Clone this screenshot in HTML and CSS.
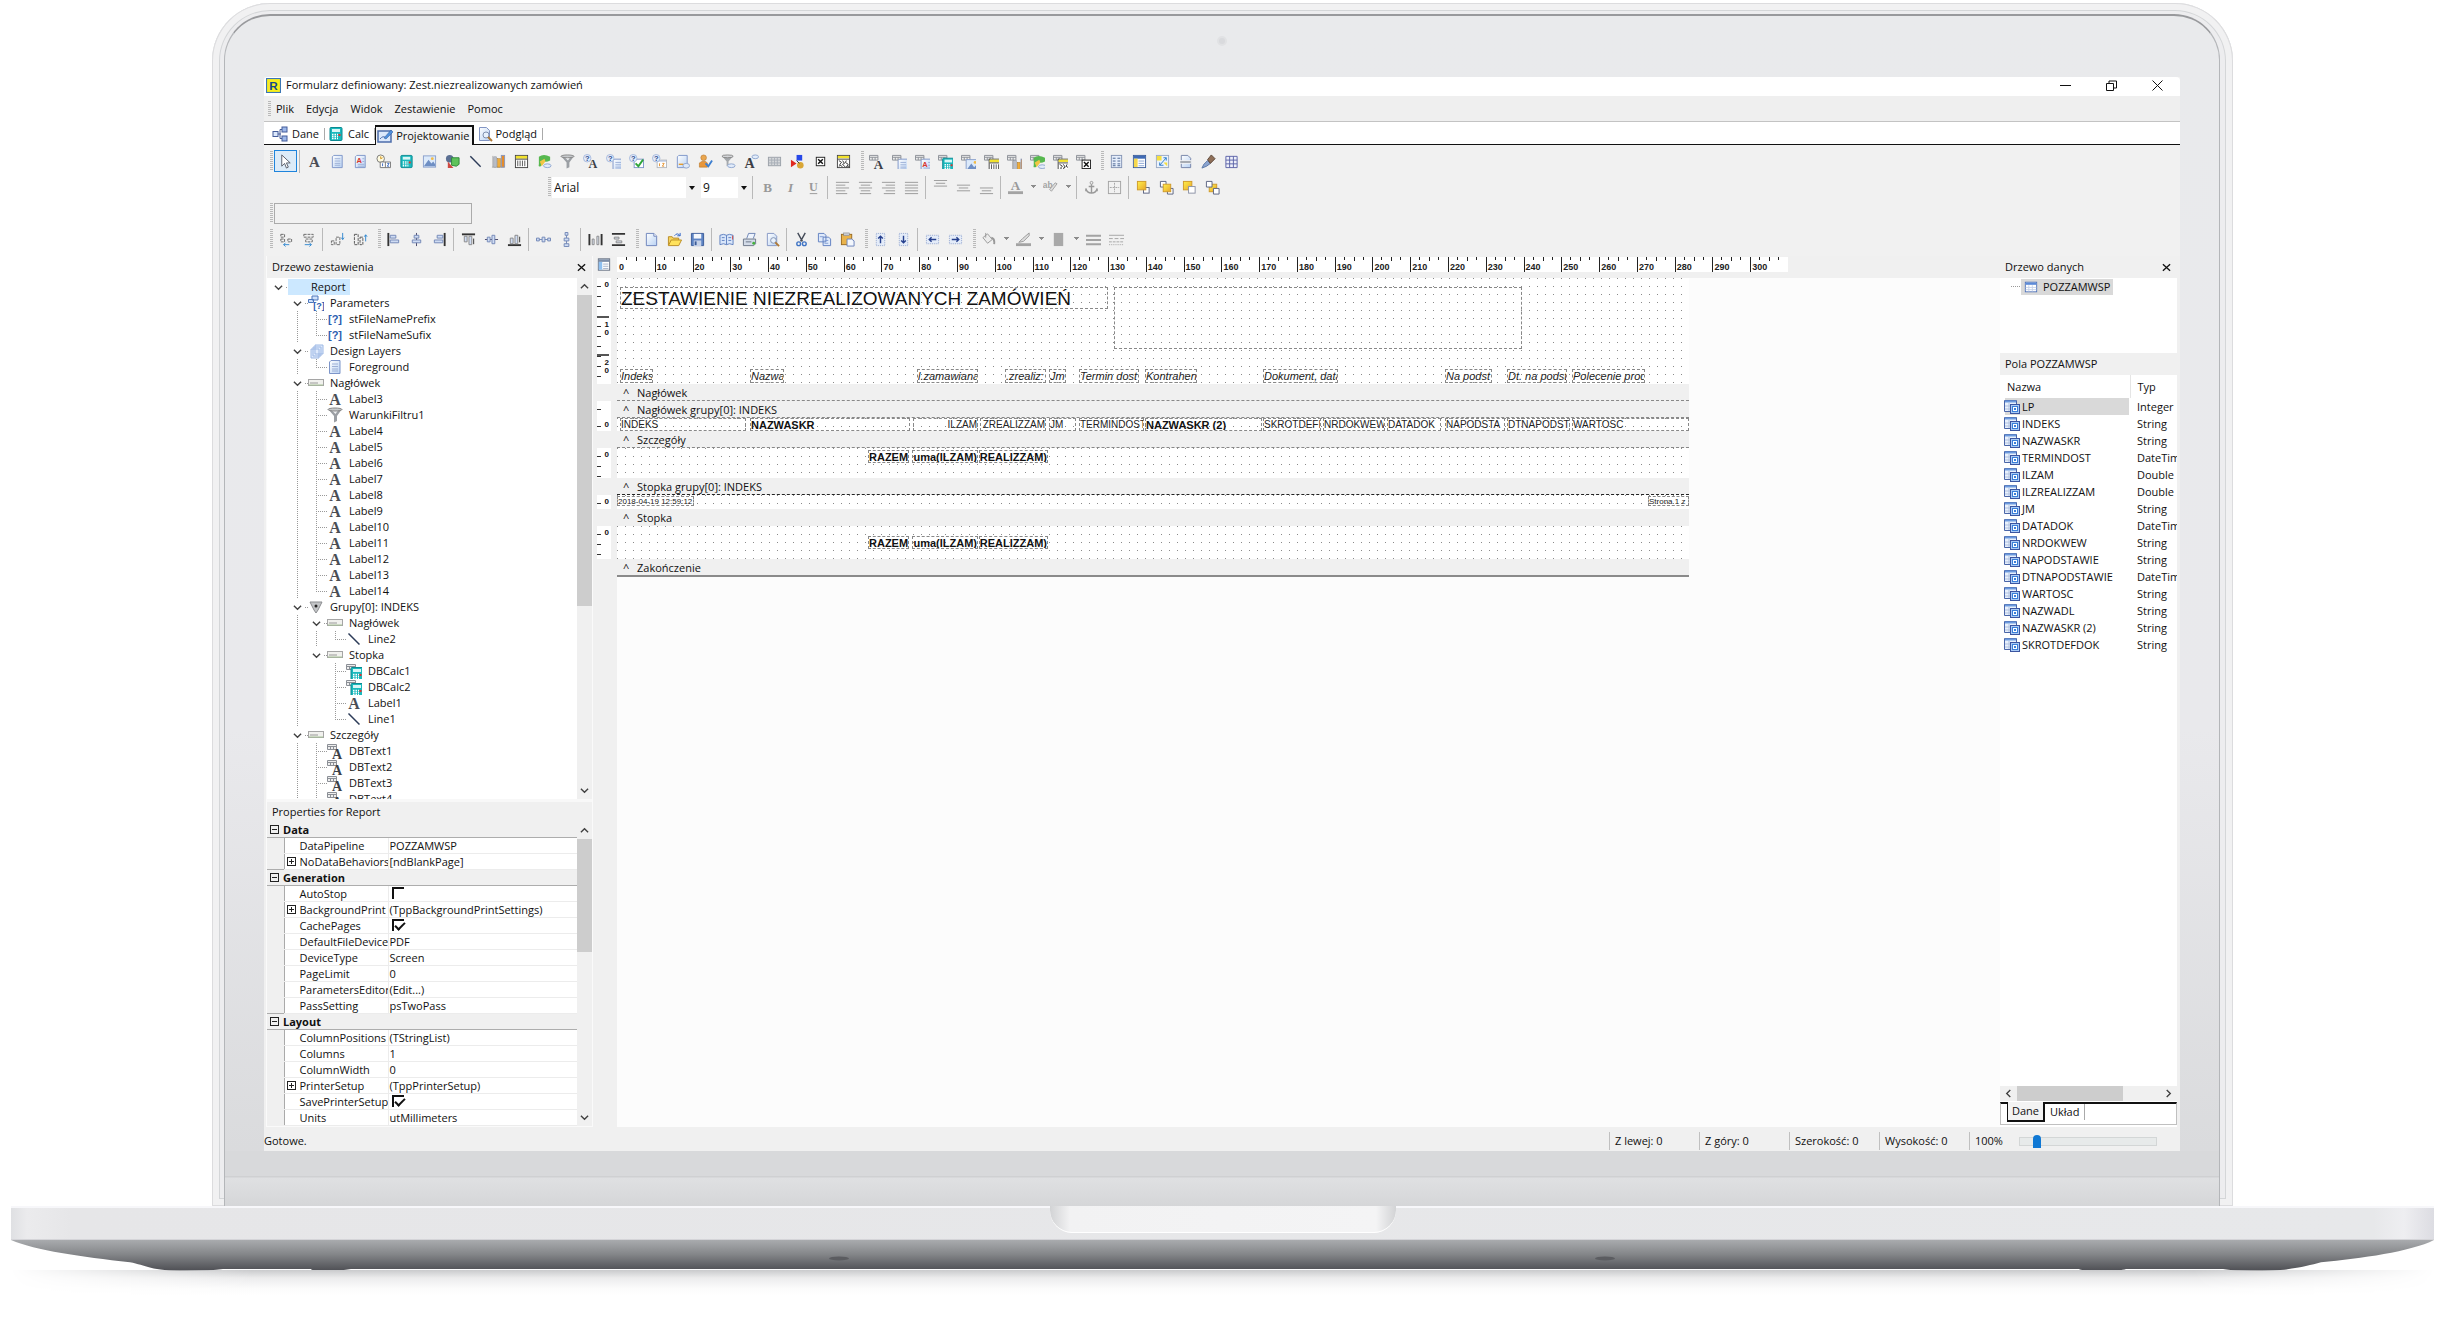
FILE: index.html
```html
<!DOCTYPE html>
<html lang="pl">
<head>
<meta charset="utf-8">
<title>Formularz definiowany: Zest.niezrealizowanych zamówień</title>
<link rel="stylesheet" href="styles.css">
</head>
<body>
<svg class="defs" aria-hidden="true">
<defs>
<linearGradient id="gy" x1="0" y1="0" x2="1" y2="1"><stop offset="0" stop-color="#fff04a"/><stop offset="1" stop-color="#e8a62c"/></linearGradient>
<linearGradient id="gb" x1="0" y1="0" x2="1" y2="1"><stop offset="0" stop-color="#fff"/><stop offset="1" stop-color="#b9d2f3"/></linearGradient>
<linearGradient id="gu" x1="0" y1="0" x2="0" y2="1"><stop offset="0" stop-color="#a9abae"/><stop offset=".45" stop-color="#85878a"/><stop offset="1" stop-color="#4d4e53"/></linearGradient>
<symbol id="cursor" viewBox="0 0 16 16"><path d="M4 1v12l3-3 2 5 2-1-2-4.500h4z" fill="#fff" stroke="#555b66"/></symbol>
<symbol id="A" viewBox="0 0 16 16"><text x="8" y="14" text-anchor="middle" class="serif" font-size="16" fill="#4a4d55">A</text></symbol>
<symbol id="page" viewBox="0 0 16 16"><path d="M4 1.500h9v13H2.500V3z" fill="url(#gb)" stroke="#7d95c9"/></symbol>
<symbol id="memo" viewBox="0 0 16 16"><use href="#page"/><path d="M5 5h6M5 7.500h6M5 10h6M5 12h6" stroke="#9db0d6"/></symbol>
<symbol id="rich" viewBox="0 0 16 16"><use href="#page"/><text x="6.500" y="9.500" text-anchor="middle" class="sansb" font-size="8" fill="#d8362c">A</text><path d="M10 5h2M10 8h2M5 11h7M5 13h7" stroke="#9db0d6"/></symbol>
<symbol id="sysvar" viewBox="0 0 16 16"><circle cx="5" cy="5" r="4" fill="#fffbe0" stroke="#777"/><path d="M5 2.500V5l2-1" stroke="#d09010" fill="none"/><path d="M4.500 8.500h11v6h-11zM10 8.500v6" fill="#fff" stroke="#777"/><path d="M7 10v3M12 10h2l-2 3h2" stroke="#3a6ac0" fill="none"/></symbol>
<symbol id="calc" viewBox="0 0 16 16"><rect x="2" y="1.500" width="12" height="13" rx="1" fill="#19b9bd" stroke="#0b8a92"/><rect x="4" y="3" width="8" height="3" fill="#d8f6f6"/><path d="M4 8.500h6M4 10.500h6M4 12.500h6" stroke="#fff" stroke-width="1.500" stroke-dasharray="1.500 1"/><rect x="10.500" y="8" width="2" height="2" fill="#e2342e"/></symbol>
<symbol id="image" viewBox="0 0 16 16"><rect x="1.500" y="2" width="13" height="12" fill="#dceafb" stroke="#8aa0cc"/><path d="M2 13l5-7 3 4 2-2 2 3v2z" fill="#6f8fc4"/><circle cx="11" cy="5" r="1.500" fill="#f3bb45"/></symbol>
<symbol id="shape" viewBox="0 0 16 16"><circle cx="5" cy="5" r="4" fill="#5b6f92"/><path d="M7 4h8v7l-3 2-5-1z" fill="#5fc35b" stroke="#30883a"/><path d="M3 15V8l6 7z" fill="#cf4a42"/></symbol>
<symbol id="line" viewBox="0 0 16 16"><path d="M2.500 2.500l11 11" stroke="#2c3b58" stroke-width="1.500"/></symbol>
<symbol id="chart" viewBox="0 0 16 16"><path d="M2 2v12M1 14h13" stroke="#aaa"/><rect x="3" y="3" width="3" height="11" fill="#b9bdc6" stroke="#878c99" stroke-width=".5"/><rect x="7" y="5" width="3" height="9" fill="#efac3a" stroke="#a5701c" stroke-width=".5"/><rect x="11" y="1.500" width="3.500" height="12.500" fill="#e68c2b" stroke="#8897bb"/></symbol>
<symbol id="barcode" viewBox="0 0 16 16"><rect x="1.500" y="1.500" width="13" height="13" fill="#fff" stroke="#444"/><rect x="2" y="2" width="12" height="3" fill="#f2e22d"/><path d="M2 5.500h12" stroke="#444"/><path d="M4 7v6M6.500 7v6M9 7v6M11.500 7v6" stroke="#555"/></symbol>
<symbol id="region" viewBox="0 0 16 16"><path d="M2 3q5-4 12 0v4q-4 2-6 1l-4 5q-3 1-2-2z" fill="#57b84f"/><path d="M3 8l5-3 1 3-4 5z" fill="#f1c644"/><ellipse cx="11" cy="12.500" rx="4" ry="2" fill="#e2ecfa" stroke="#8fa6cf"/></symbol>
<symbol id="filter" viewBox="0 0 16 16"><path d="M1 2h14L10 9v5l-3 1.500V9z" fill="#9b9fa4"/><path d="M5 3.500h6L8.500 7z" fill="#eef0f2"/><ellipse cx="8" cy="2.500" rx="7" ry="1.500" fill="#c6c9cc" stroke="#888"/></symbol>
<symbol id="q" viewBox="0 0 16 16"><circle cx="4.500" cy="4.500" r="4" fill="#e2ebfa" stroke="#8ea5d2" stroke-width=".7"/><text x="4.500" y="7.500" text-anchor="middle" class="sansb" font-size="8" fill="#2d4d91">?</text></symbol>
<symbol id="qA" viewBox="0 0 16 16"><use href="#q"/><text x="10.500" y="15" text-anchor="middle" class="serif" font-size="13" fill="#3c3f47">A</text></symbol>
<symbol id="qmemo" viewBox="0 0 16 16"><svg x="5" y="4" width="12" height="12"><use href="#memo"/></svg><use href="#q"/></symbol>
<symbol id="qcheck" viewBox="0 0 16 16"><rect x="5.500" y="5.500" width="10" height="9" fill="#fff" stroke="#7d95c9"/><path d="M7 10l3 3 5-7" fill="none" stroke="#2fa53a" stroke-width="2"/><use href="#q"/></symbol>
<symbol id="qcal" viewBox="0 0 16 16"><rect x="5.500" y="6.500" width="10" height="8" fill="#fff" stroke="#b5b8bd"/><path d="M6 7.500h9" stroke="#9fb2d8"/><path d="M8 10v3M11 10h2l-2 3h2" stroke="#e59330" fill="none"/><use href="#q"/></symbol>
<symbol id="pagelink" viewBox="0 0 16 16"><use href="#page"/><path d="M4 11h5" stroke="#e49c2d" stroke-width="1.500"/><ellipse cx="12" cy="12.500" rx="3.500" ry="2.500" fill="#dfe9f8" stroke="#8fa6cf"/></symbol>
<symbol id="person" viewBox="0 0 16 16"><circle cx="6" cy="4" r="3" fill="#e9a64f" stroke="#b87326" stroke-width=".6"/><path d="M1.500 14V9.500L4 8h4l2 1.500V14z" fill="#e8963a" stroke="#b87326" stroke-width=".6"/><path d="M8 10l3 3 4-6" fill="none" stroke="#3d7fd0" stroke-width="2"/></symbol>
<symbol id="filter2" viewBox="0 0 16 16"><path d="M1 2h12L8 8v4l-2 1V8z" fill="#a4a8ac"/><ellipse cx="7" cy="2.500" rx="6" ry="1.500" fill="#d3d5d8" stroke="#888"/><ellipse cx="11" cy="12.500" rx="4" ry="2" fill="#e2ecfa" stroke="#8fa6cf"/></symbol>
<symbol id="Alink" viewBox="0 0 16 16"><text x="6" y="15" text-anchor="middle" class="serif" font-size="15" fill="#3c3f47">A</text><ellipse cx="12" cy="3" rx="3.500" ry="2" fill="#e2ecfa" stroke="#8fa6cf"/></symbol>
<symbol id="gridgray" viewBox="0 0 16 16"><rect x="1.500" y="3.500" width="13" height="9" fill="#d5d7da" stroke="#9aa0a8"/><path d="M2 6.500h12M2 9.500h12M5 4v8M8 4v8M11 4v8" stroke="#a9afb8"/></symbol>
<symbol id="tee" viewBox="0 0 16 16"><rect x="7" y="1" width="6" height="6" fill="#2748e8"/><path d="M1 6v8l6-4z" fill="#e02a20"/><circle cx="11" cy="12" r="3.500" fill="#d9a636"/><path d="M7 7l3 3" stroke="#333"/></symbol>
<symbol id="xbox" viewBox="0 0 16 16"><rect x="3.500" y="3.500" width="9" height="9" fill="#fff" stroke="#222"/><path d="M5.500 5.500l5 5M10.500 5.500l-5 5" stroke="#111" stroke-width="1.500"/></symbol>
<symbol id="code2d" viewBox="0 0 16 16"><rect x="1.500" y="1.500" width="13" height="13" fill="#fff" stroke="#444"/><rect x="2" y="2" width="12" height="2.500" fill="#f2e22d"/><path d="M2 5.500h12" stroke="#444"/><path d="M3 7l3 2-2 2 3 3M7 7l2 3-2 1 3 3M11 7l-1 2 3 2-2 3M3 13l2-1M12 13h2" fill="none" stroke="#333"/></symbol>
<symbol id="db" viewBox="0 0 16 16"><path d="M.5 1.500h9v5h-9zM.5 3.500h9M3.500 3.500v3M6.500 3.500v3" fill="#eee" stroke="#8b8f96"/></symbol>
<symbol id="dbA" viewBox="0 0 16 16"><use href="#db"/><text x="10" y="15.500" text-anchor="middle" class="serif" font-size="14" fill="#3c3f47">A</text></symbol>
<symbol id="dbmemo" viewBox="0 0 16 16"><use href="#db"/><svg x="4" y="4" width="12" height="12"><use href="#memo"/></svg></symbol>
<symbol id="dbrich" viewBox="0 0 16 16"><use href="#db"/><svg x="4" y="4" width="12" height="12"><use href="#rich"/></svg></symbol>
<symbol id="dbcalc" viewBox="0 0 16 16"><use href="#db"/><svg x="3" y="3" width="13" height="13"><use href="#calc"/></svg></symbol>
<symbol id="dbimg" viewBox="0 0 16 16"><use href="#db"/><svg x="4" y="4" width="12" height="12"><use href="#image"/></svg></symbol>
<symbol id="dbbar" viewBox="0 0 16 16"><use href="#db"/><svg x="4" y="4" width="12" height="12"><use href="#barcode"/></svg></symbol>
<symbol id="dbchart" viewBox="0 0 16 16"><use href="#db"/><svg x="4" y="4" width="12" height="12"><use href="#chart"/></svg></symbol>
<symbol id="dbregion" viewBox="0 0 16 16"><use href="#db"/><svg x="2" y="1" width="14" height="15"><use href="#region"/></svg></symbol>
<symbol id="db2d" viewBox="0 0 16 16"><use href="#db"/><svg x="4" y="4" width="12" height="12"><use href="#code2d"/></svg></symbol>
<symbol id="dbx" viewBox="0 0 16 16"><use href="#db"/><svg x="3" y="3" width="14" height="14"><use href="#xbox"/></svg></symbol>
<symbol id="report" viewBox="0 0 16 16"><rect x="2.500" y="1.500" width="11" height="13" fill="#e6eefb" stroke="#8494b4"/><path d="M4 4.500h3M4 7.500h3M4 10.500h3M9 4.500h3M9 7.500h3M9 10.500h3M4 12.500h3M9 12.500h3" stroke="#46608f"/></symbol>
<symbol id="table" viewBox="0 0 16 16"><rect x="1.500" y="1.500" width="13" height="13" fill="#fff" stroke="#3b5d9b"/><rect x="2" y="2" width="12" height="3" fill="#3f6ab5"/><rect x="2" y="5" width="4" height="9" fill="#f6d84c"/><path d="M7 7.500h6M7 10h6M7 12.500h6" stroke="#8ba5d3"/></symbol>
<symbol id="sheet" viewBox="0 0 16 16"><rect x="1.500" y="1.500" width="13" height="13" fill="#fff" stroke="#5a6578"/><rect x="2" y="2" width="12" height="3" fill="#7d8ea8"/><rect x="2" y="5" width="4" height="9" fill="#8fc0f0"/><path d="M7 7.500h6M7 10h6M7 12.500h6" stroke="#9aa9c4"/></symbol>
<symbol id="cross" viewBox="0 0 16 16"><rect x="1.500" y="1.500" width="13" height="13" fill="#eaf2fd" stroke="#9aa9c4"/><path d="M2 2h5v5H2zM9 9h4v4z" fill="#f5df3f"/><path d="M5 12l7-8M9 4h3v3M5 9v3h4" stroke="#2a7bc9" fill="none"/></symbol>
<symbol id="pagebreak" viewBox="0 0 16 16"><path d="M3.500 1.500h7l3 3v10h-10z" fill="url(#gb)" stroke="#7382a8"/><rect x="2" y="7" width="12" height="3" fill="#a7abb2" stroke="#fff" stroke-width=".7"/></symbol>
<symbol id="brush" viewBox="0 0 16 16"><path d="M1 15l2-4 4-4 3 3-4 3z" fill="#8ba4cf" stroke="#5b77a8"/><path d="M7 6l4-5 4 4-5 5z" fill="#8f6f58" stroke="#5c4638"/></symbol>
<symbol id="grid" viewBox="0 0 16 16"><path d="M2 2.500h12v12H2zM2 6.500h12M2 10.500h12M6 2.500v12M10 2.500v12" fill="#eef0fa" stroke="#5b62a6"/></symbol>
<symbol id="B" viewBox="0 0 16 16"><text x="8" y="13" text-anchor="middle" class="serif" font-size="14" fill="#999">B</text></symbol>
<symbol id="I" viewBox="0 0 16 16"><text x="8" y="13" text-anchor="middle" class="serif" font-style="italic" font-size="14" fill="#999">I</text></symbol>
<symbol id="U" viewBox="0 0 16 16"><text x="8" y="12" text-anchor="middle" class="serif" font-size="13" fill="#999">U</text><path d="M4 14.500h8" stroke="#999"/></symbol>
<symbol id="al" viewBox="0 0 16 16"><path d="M1 2.500h14M1 5.500h10M1 8.500h14M1 11.500h10M1 14.500h12" stroke="#999"/></symbol>
<symbol id="ac" viewBox="0 0 16 16"><path d="M1 2.500h14M3 5.500h10M1 8.500h14M3 11.500h10M2 14.500h12" stroke="#999"/></symbol>
<symbol id="ar" viewBox="0 0 16 16"><path d="M1 2.500h14M5 5.500h10M1 8.500h14M5 11.500h10M3 14.500h12" stroke="#999"/></symbol>
<symbol id="aj" viewBox="0 0 16 16"><path d="M1 2.500h14M1 5.500h14M1 8.500h14M1 11.500h14M1 14.500h14" stroke="#999"/></symbol>
<symbol id="vt" viewBox="0 0 16 16"><path d="M1 .5h14M3 3.500h10M1 6.500h14" stroke="#999"/></symbol>
<symbol id="vm" viewBox="0 0 16 16"><path d="M1 5.500h14M3 8.500h10M1 11.500h14" stroke="#999"/></symbol>
<symbol id="vb" viewBox="0 0 16 16"><path d="M1 8.500h14M3 11.500h10M1 14.500h14" stroke="#999"/></symbol>
<symbol id="Acol" viewBox="0 0 16 16"><text x="8" y="11" text-anchor="middle" class="serif" font-size="14" fill="#999">A</text><rect y="12" width="16" height="3" fill="#a3a3a3"/></symbol>
<symbol id="ab" viewBox="0 0 16 16"><text x="5" y="8" text-anchor="middle" class="sansb" font-size="9" fill="#a3a3a3">ab</text><path d="M7 10l6-7 2 1-6 8z" fill="#ddd" stroke="#a3a3a3"/></symbol>
<symbol id="anchor" viewBox="0 0 16 16"><circle cx="8" cy="3" r="1.500" fill="none" stroke="#999"/><path d="M8 4.500V14M5 7h6M2 9q1 5 6 5t6-5M2 9v3M14 9v3" fill="none" stroke="#999" stroke-width="1.500"/></symbol>
<symbol id="border" viewBox="0 0 16 16"><rect x="1.500" y="1.500" width="13" height="13" fill="none" stroke="#a3a3a3"/><path d="M8 3v10M3 8h10" stroke="#a3a3a3" stroke-dasharray="2 1"/></symbol>
<symbol id="front" viewBox="0 0 16 16"><rect x="8" y="8" width="6" height="6" fill="#fff" stroke="#5a6280"/><rect x="1.500" y="1.500" width="9" height="9" fill="url(#gy)" stroke="#cf9a2a"/></symbol>
<symbol id="fwd" viewBox="0 0 16 16"><path d="M1.500 1.500h6v6h-6zM9 9h6v6H9z" fill="#fff" stroke="#5a6280"/><rect x="4.500" y="4.500" width="8" height="8" fill="url(#gy)" stroke="#cf9a2a"/></symbol>
<symbol id="back" viewBox="0 0 16 16"><rect x="1.500" y="1.500" width="9" height="9" fill="url(#gy)" stroke="#cf9a2a"/><rect x="7" y="7" width="7" height="7" fill="#fff" stroke="#8a90a5"/></symbol>
<symbol id="bwd" viewBox="0 0 16 16"><rect x="4.500" y="4.500" width="8" height="8" fill="url(#gy)" stroke="#cf9a2a"/><path d="M1.500 1.500h6v6h-6zM9 9h6v6H9z" fill="#fff" stroke="#5a6280"/></symbol>
<symbol id="s1" viewBox="0 0 16 16"><path d="M3 2.500h4v3H3zM3 7.500h4v3H3zM10.500 7.500h4v3h-4z" fill="none" stroke="#666" stroke-dasharray="3 1"/><path d="M12 13.500H6M8 11.500l-2 2 2 2" stroke="#2f86cf" fill="none"/></symbol>
<symbol id="s2" viewBox="0 0 16 16"><path d="M3 2.500h10v3H3zM5 7.500h7v3H5z" fill="none" stroke="#666" stroke-dasharray="3 1"/><path d="M4 13.500h7M9 11.500l2 2-2 2" stroke="#2f86cf" fill="none"/></symbol>
<symbol id="s3" viewBox="0 0 16 16"><path d="M1.500 9.500h3v4h-3zM6.500 5.500h4v8h-4z" fill="none" stroke="#666" stroke-dasharray="3 1"/><path d="M13.500 1v7M12 6l1.500 2L15 6" stroke="#2f86cf" fill="none"/></symbol>
<symbol id="s4" viewBox="0 0 16 16"><path d="M1.500 2.500h4v11h-4zM7.500 5.500h3v8h-3z" fill="none" stroke="#555" stroke-dasharray="3 1"/><path d="M13.500 10V3M12 5l1.500-2L15 5" stroke="#2f86cf" fill="none"/></symbol>
<symbol id="h1" viewBox="0 0 16 16"><path d="M2.500 1v14" stroke="#333" stroke-width="2"/><path d="M4.500 3.500h6v3h-6zM4.500 8.500h9v3h-9z" fill="#cfdcf3" stroke="#7186b5"/></symbol>
<symbol id="h2" viewBox="0 0 16 16"><path d="M8 1v14" stroke="#446"/><path d="M5.500 3.500h5v3h-5zM3.500 8.500h9v3h-9z" fill="#cfdcf3" stroke="#7186b5"/></symbol>
<symbol id="h3" viewBox="0 0 16 16"><path d="M13.500 1v14" stroke="#333" stroke-width="2"/><path d="M5.500 3.500h6v3h-6zM2.500 8.500h9v3h-9z" fill="#cfdcf3" stroke="#7186b5"/></symbol>
<symbol id="v1" viewBox="0 0 16 16"><path d="M1 2.500h14" stroke="#333" stroke-width="2"/><path d="M3.500 4.500h3v6h-3zM8.500 4.500h3v9h-3z" fill="#cfdcf3" stroke="#888"/><path d="M13.500 13V7" stroke="#333"/></symbol>
<symbol id="v2" viewBox="0 0 16 16"><path d="M1 8h14" stroke="#446"/><path d="M3.500 5.500h3v5h-3zM8.500 3.500h3v9h-3z" fill="#cfdcf3" stroke="#7186b5"/></symbol>
<symbol id="v3" viewBox="0 0 16 16"><path d="M1 14h14" stroke="#333" stroke-width="2"/><path d="M3.500 6.500h3v6h-3zM8.500 3.500h3v9h-3z" fill="#cfdcf3" stroke="#888"/><path d="M13.500 5v6" stroke="#333"/></symbol>
<symbol id="d1" viewBox="0 0 16 16"><path d="M0 8h16" stroke="#7186b5"/><path d="M.5 6.500h3v3h-3zM6.500 5.500h3v5h-3zM12.500 6.500h3v3h-3z" fill="#cfdcf3" stroke="#7186b5"/></symbol>
<symbol id="d2" viewBox="0 0 16 16"><path d="M8 0v16" stroke="#7186b5"/><path d="M6.500 .5h3v3h-3zM5.500 6.500h5v3h-5zM5.500 12.500h5v3h-5z" fill="#cfdcf3" stroke="#7186b5"/></symbol>
<symbol id="e1" viewBox="0 0 16 16"><path d="M1.500 2v12M14.500 2v12" stroke="#333" stroke-width="2"/><path d="M4.500 7.500h2v6h-2zM9.500 4.500h2v9h-2z" fill="#dde6f6" stroke="#888"/></symbol>
<symbol id="e2" viewBox="0 0 16 16"><path d="M1 2h14M1 14h14" stroke="#333" stroke-width="2"/><path d="M3.500 5.500h5v2h-5zM5.500 9.500h6v2h-6z" fill="#dde6f6" stroke="#888"/></symbol>
<symbol id="new" viewBox="0 0 16 16"><path d="M2.500 1.500h8l3 3v10h-11z" fill="url(#gb)" stroke="#6b82bb"/><path d="M10.500 1.500v3h3" fill="#fff" stroke="#6b82bb"/></symbol>
<symbol id="open" viewBox="0 0 16 16"><path d="M1.500 14V5h4l1 1.500h6V9" fill="#f5d45e" stroke="#b98b22"/><path d="M1.500 14.500l3-6h11l-3 6z" fill="#ffe25c" stroke="#b98b22"/><path d="M8 4q3-4 6 0M14 1v3h-3" fill="none" stroke="#2c62c9"/></symbol>
<symbol id="save" viewBox="0 0 16 16"><path d="M1.500 1.500h13v13h-13z" fill="#5e84c4" stroke="#3a5b99"/><rect x="4" y="2" width="8" height="5" fill="#f4f7fc"/><rect x="4" y="9" width="8" height="6" fill="#c6d2e8"/><rect x="5" y="10" width="2" height="4" fill="#3a5b99"/></symbol>
<symbol id="book" viewBox="0 0 16 16"><path d="M1 3.500q4-2 7 0 3-2 7 0v10q-4-2-7 0-3-2-7 0zM8 3.500v10" fill="#d9e6fa" stroke="#5e7fbf"/><path d="M3 6h3M3 9h3M10 6h3M10 9h3" stroke="#5e7fbf"/><path d="M14.500 4v4" stroke="#d9493f"/></symbol>
<symbol id="print" viewBox="0 0 16 16"><path d="M5 7l2-5.500h7L12 7" fill="#eef4fd" stroke="#6d83b3"/><path d="M1.500 7.500h13v5l-2 2h-11z" fill="#d3dbe8" stroke="#6b7587"/><path d="M4 10.500h6" stroke="#6b7587"/><circle cx="12.500" cy="12" r="1.500" fill="#43b13c"/></symbol>
<symbol id="preview" viewBox="0 0 16 16"><path d="M2.500 1.500h7l3 3v10h-10z" fill="url(#gb)" stroke="#8295c4"/><circle cx="9" cy="9" r="3" fill="#e8f1fc" stroke="#7f8fae"/><path d="M11 11l4 4" stroke="#b07a35" stroke-width="2"/></symbol>
<symbol id="cut" viewBox="0 0 16 16"><path d="M4 1l5 9M12 1L7 10" stroke="#444b58" stroke-width="1.500"/><circle cx="5" cy="12.500" r="2" fill="none" stroke="#3e73c4" stroke-width="1.500"/><circle cx="11" cy="12.500" r="2" fill="none" stroke="#3e73c4" stroke-width="1.500"/></symbol>
<symbol id="copy" viewBox="0 0 16 16"><path d="M1.500 1.500h6l2 2v7h-8zM6.500 5.500h6l2 2v7h-8z" fill="#dfeafb" stroke="#5f7fc0"/><path d="M3 5h4M8 9h4M8 12h4" stroke="#7f9bd1"/></symbol>
<symbol id="paste" viewBox="0 0 16 16"><rect x="1.500" y="2.500" width="11" height="11" fill="#e9b34b" stroke="#9a6b1f"/><rect x="4" y="1" width="6" height="3" fill="#c9ccd2" stroke="#777" stroke-width=".5"/><path d="M7.500 7.500h5l2.500 2v5.500H7.500z" fill="#f3f7fd" stroke="#6b82bb"/></symbol>
<symbol id="up" viewBox="0 0 16 16"><rect x="3.500" y="1.500" width="9" height="13" fill="#e4ecf9" stroke="#93a6cf" stroke-dasharray="1 1"/><path d="M8 12V5M5.500 7L8 4.500 10.500 7" fill="none" stroke="#26408e" stroke-width="1.500"/></symbol>
<symbol id="down" viewBox="0 0 16 16"><rect x="3.500" y="1.500" width="9" height="13" fill="#e4ecf9" stroke="#93a6cf" stroke-dasharray="1 1"/><path d="M8 4v7M5.500 9L8 11.500 10.500 9" fill="none" stroke="#26408e" stroke-width="1.500"/></symbol>
<symbol id="left" viewBox="0 0 16 16"><rect x="1.500" y="3.500" width="13" height="9" fill="#e4ecf9" stroke="#93a6cf" stroke-dasharray="1 1"/><path d="M12 8H5M7 5.500L4.500 8 7 10.500" fill="none" stroke="#26408e" stroke-width="1.500"/></symbol>
<symbol id="right" viewBox="0 0 16 16"><rect x="1.500" y="3.500" width="13" height="9" fill="#e4ecf9" stroke="#93a6cf" stroke-dasharray="1 1"/><path d="M4 8h7M9 5.500L11.500 8 9 10.500" fill="none" stroke="#26408e" stroke-width="1.500"/></symbol>
<symbol id="bucket" viewBox="0 0 16 16"><path d="M2 6l5-4 5 6-5 4zM5 1v5" fill="#ececec" stroke="#999"/><path d="M11 6q4 1 3 7" fill="none" stroke="#999" stroke-width="2"/></symbol>
<symbol id="pen" viewBox="0 0 16 16"><path d="M3 11l4-4 7-6v3l-6 6z" fill="#ddd" stroke="#999"/><rect y="12" width="16" height="3" fill="#a3a3a3"/></symbol>
<symbol id="rect" viewBox="0 0 16 16"><rect x="3" y="1" width="10" height="14" fill="#a9a9a9"/></symbol>
<symbol id="lines" viewBox="0 0 16 16"><path d="M0 4h16M0 8.500h16M0 13h16" stroke="#a3a3a3" stroke-width="2"/></symbol>
<symbol id="dashes" viewBox="0 0 16 16"><path d="M0 3.500h16" stroke="#a3a3a3"/><path d="M0 7h16" stroke="#a3a3a3" stroke-dasharray="4 2"/><path d="M0 10.500h16" stroke="#a3a3a3" stroke-dasharray="3 1"/><path d="M0 13.500h16" stroke="#a3a3a3" stroke-dasharray="1 1"/></symbol>
<symbol id="data" viewBox="0 0 16 16"><path d="M5 8h4M8 3.500v9M8 3.500h2M8 12.500h2" stroke="#445c9a" fill="none"/><rect x="1" y="5.500" width="5" height="5" fill="#dce8fb" stroke="#445c9a"/><rect x="10" y="1" width="5" height="5" fill="#9db8ea" stroke="#445c9a"/><rect x="10" y="10" width="5" height="5" fill="#9db8ea" stroke="#445c9a"/></symbol>
<symbol id="design" viewBox="0 0 16 16"><rect x="1" y="3" width="13" height="11" fill="#dbe8fb" stroke="#4d6dab" stroke-width="1.500"/><path d="M3 11q3-4 6-1" stroke="#4d6dab" fill="none"/><path d="M7 10l7-8 2 2-7 7z" fill="#4f8fdc" stroke="#2b5796" stroke-width=".5"/></symbol>
<symbol id="params" viewBox="0 0 16 16"><path d="M4 1h6v4H4zM.5 4.500h5v3h-5z" fill="#cfe0fa" stroke="#4a76bd"/><text x="11" y="14" text-anchor="middle" class="sansb" font-size="9" fill="#2b5db0">[?]</text></symbol>
<symbol id="param" viewBox="0 0 16 16"><text x="8" y="12" text-anchor="middle" class="sansb" font-size="11" fill="#2b5db0">[?]</text></symbol>
<symbol id="layers" viewBox="0 0 16 16"><path d="M3 6h8v9H3zM5 4h8v9H5zM7 2h8v9H7z" fill="#dfeafc" stroke="#9db8e4"/></symbol>
<symbol id="band" viewBox="0 0 16 8"><rect x=".5" y=".5" width="15" height="6" fill="#f1f1ee" stroke="#a5a5a5"/><path d="M1 6h14" stroke="#a9c49a"/><path d="M2.500 4h8" stroke="#444" stroke-dasharray="1 1"/></symbol>
<symbol id="group" viewBox="0 0 16 16"><path d="M2 3h12l-4 8-2 3-2-3z" fill="#c2c4c6" stroke="#8b8d90"/><circle cx="8" cy="7" r="1.500" fill="#222"/></symbol>
<symbol id="dtable" viewBox="0 0 16 16"><rect x="1.500" y="2.500" width="13" height="11" fill="#fff" stroke="#4b6fb8"/><rect x="2" y="3" width="12" height="2.500" fill="#5b8ad8"/><path d="M5.500 6v7M9.500 6v7M2 8.500h12M2 11h12" stroke="#c3d0e8"/></symbol>
<symbol id="field" viewBox="0 0 16 16"><path d="M.5 1.500h12v11H.5z" fill="#e9f1fc" stroke="#4b66a8"/><path d="M1 2.500h11" stroke="#6c9ade" stroke-width="2"/><path d="M5 4v8M1 7h11M1 10h11" stroke="#b0c1e0"/><rect x="6.500" y="5.500" width="9" height="9" fill="#a9cbf6" stroke="#3b55a0"/><rect x="8.500" y="7.500" width="5" height="5" fill="#fff" stroke="#3b7fd8"/><rect x="10" y="9" width="2" height="2" fill="#3b7fd8"/></symbol>
<symbol id="chev" viewBox="0 0 10 10"><path d="M1 3l4 4 4-4" fill="none" stroke="#404040" stroke-width="1.500"/></symbol>
<symbol id="x" viewBox="0 0 10 10"><path d="M1 1.500l8 7M9 1.500l-8 7" fill="none" stroke="#111" stroke-width="1.500"/></symbol>
</defs></svg>

<div class="laptop">
<div class="lid"><div class="bezel">
<div class="camera"></div>
<div class="screen">
<header class="titlebar"><svg class="appicon" viewBox="0 0 14 14"><rect width="14" height="14" fill="#3b76b4"/><rect x="1" y="1" width="12" height="12" fill="#f6ee1d"/><text x="7" y="11" text-anchor="middle" class="sansb" font-size="11" fill="#124a8c">R</text></svg><h1>Formularz definiowany: Zest.niezrealizowanych zamówień</h1>
<div class="winbtns"><button aria-label="Minimalizuj"><svg viewBox="0 0 11 11"><path d="M0 5.500h11" stroke="#111"/></svg></button><button aria-label="Przywróć"><svg viewBox="0 0 11 11"><path d="M.5 3.500h7v7h-7zM3 3.500V1h7.500v7H8" fill="none" stroke="#111"/></svg></button><button aria-label="Zamknij"><svg viewBox="0 0 11 11"><path d="M.5 .5l10 10M10.500 .5l-10 10" stroke="#111"/></svg></button></div></header>
<nav class="menu"><i class="grip"></i><button>Plik</button><button>Edycja</button><button>Widok</button><button>Zestawienie</button><button>Pomoc</button></nav>
<div class="tabs" role="tablist"><button role="tab"><svg><use href="#data"/></svg>Dane</button><button role="tab"><svg><use href="#calc"/></svg>Calc</button><button role="tab" class="on"><svg><use href="#design"/></svg>Projektowanie</button><button role="tab"><svg><use href="#preview"/></svg>Podgląd</button></div>

<div class="bars">
<div class="bar"><i class="grip"></i><button class="on" aria-label="Wskaźnik"><svg><use href="#cursor"/></svg></button><i class="sep"></i><button aria-label="Etykieta"><svg><use href="#A"/></svg></button><button aria-label="Memo"><svg><use href="#memo"/></svg></button><button aria-label="Tekst RTF"><svg><use href="#rich"/></svg></button><button aria-label="Zmienna systemowa"><svg><use href="#sysvar"/></svg></button><button aria-label="Zmienna"><svg><use href="#calc"/></svg></button><button aria-label="Obraz"><svg><use href="#image"/></svg></button><button aria-label="Kształt"><svg><use href="#shape"/></svg></button><button aria-label="Linia"><svg><use href="#line"/></svg></button><button aria-label="Wykres"><svg><use href="#chart"/></svg></button><button aria-label="Kod kreskowy"><svg><use href="#barcode"/></svg></button><button aria-label="Region"><svg><use href="#region"/></svg></button><button aria-label="Filtr"><svg><use href="#filter"/></svg></button><button aria-label="Parametr tekstowy"><svg><use href="#qA"/></svg></button><button aria-label="Parametr memo"><svg><use href="#qmemo"/></svg></button><button aria-label="Parametr logiczny"><svg><use href="#qcheck"/></svg></button><button aria-label="Parametr daty"><svg><use href="#qcal"/></svg></button><button aria-label="Strona"><svg><use href="#pagelink"/></svg></button><button aria-label="Operator"><svg><use href="#person"/></svg></button><button aria-label="Warunki filtru"><svg><use href="#filter2"/></svg></button><button aria-label="Opis"><svg><use href="#Alink"/></svg></button><button aria-label="Siatka"><svg><use href="#gridgray"/></svg></button><button aria-label="Diagram"><svg><use href="#tee"/></svg></button><button aria-label="Pole wyboru"><svg><use href="#xbox"/></svg></button><button aria-label="Kod 2D"><svg><use href="#code2d"/></svg></button><i class="grip"></i><button aria-label="DBText"><svg><use href="#dbA"/></svg></button><button aria-label="DBMemo"><svg><use href="#dbmemo"/></svg></button><button aria-label="DBRichText"><svg><use href="#dbrich"/></svg></button><button aria-label="DBCalc"><svg><use href="#dbcalc"/></svg></button><button aria-label="DBImage"><svg><use href="#dbimg"/></svg></button><button aria-label="DBBarCode"><svg><use href="#dbbar"/></svg></button><button aria-label="DBChart"><svg><use href="#dbchart"/></svg></button><button aria-label="DBRegion"><svg><use href="#dbregion"/></svg></button><button aria-label="DB2DCode"><svg><use href="#db2d"/></svg></button><button aria-label="DBCheckBox"><svg><use href="#dbx"/></svg></button><i class="grip"></i><button aria-label="Region raportu"><svg><use href="#report"/></svg></button><button aria-label="Podraport"><svg><use href="#table"/></svg></button><button aria-label="Tabela przestawna"><svg><use href="#cross"/></svg></button><button aria-label="Podział strony"><svg><use href="#pagebreak"/></svg></button><button aria-label="Pędzel"><svg><use href="#brush"/></svg></button><button aria-label="Tabela"><svg><use href="#grid"/></svg></button></div>
<div class="bar fonts"><i class="grip"></i><span class="combo wide"><select aria-label="Czcionka"><option>Arial</option></select></span><span class="combo"><select aria-label="Rozmiar"><option>9</option></select></span><i class="sep"></i><button aria-label="Pogrubienie"><svg><use href="#B"/></svg></button><button aria-label="Kursywa"><svg><use href="#I"/></svg></button><button aria-label="Podkreślenie"><svg><use href="#U"/></svg></button><i class="sep"></i><button aria-label="Do lewej"><svg><use href="#al"/></svg></button><button aria-label="Do środka"><svg><use href="#ac"/></svg></button><button aria-label="Do prawej"><svg><use href="#ar"/></svg></button><button aria-label="Wyjustuj"><svg><use href="#aj"/></svg></button><i class="sep"></i><button aria-label="Do góry"><svg><use href="#vt"/></svg></button><button aria-label="W pionie środek"><svg><use href="#vm"/></svg></button><button aria-label="Do dołu"><svg><use href="#vb"/></svg></button><i class="sep"></i><button aria-label="Kolor czcionki"><svg><use href="#Acol"/></svg></button><i class="arr"></i><button aria-label="Wyróżnienie"><svg><use href="#ab"/></svg></button><i class="arr"></i><i class="sep"></i><button aria-label="Zakotwicz"><svg><use href="#anchor"/></svg></button><button aria-label="Obramowanie"><svg><use href="#border"/></svg></button><i class="sep"></i><button aria-label="Na wierzch"><svg><use href="#front"/></svg></button><button aria-label="Do przodu"><svg><use href="#fwd"/></svg></button><button aria-label="Na spód"><svg><use href="#back"/></svg></button><button aria-label="Do tyłu"><svg><use href="#bwd"/></svg></button></div>
<div class="bar"><i class="grip"></i><input class="edit" type="text" aria-label="Wartość"></div>
<div class="bar"><i class="grip"></i><button aria-label="Przesuń w lewo"><svg><use href="#s1"/></svg></button><button aria-label="Przesuń w prawo"><svg><use href="#s2"/></svg></button><i class="sep"></i><button aria-label="Przesuń w dół"><svg><use href="#s3"/></svg></button><button aria-label="Przesuń w górę"><svg><use href="#s4"/></svg></button><i class="grip"></i><button aria-label="Wyrównaj lewe"><svg><use href="#h1"/></svg></button><button aria-label="Wyrównaj środki"><svg><use href="#h2"/></svg></button><button aria-label="Wyrównaj prawe"><svg><use href="#h3"/></svg></button><i class="sep"></i><button aria-label="Wyrównaj górne"><svg><use href="#v1"/></svg></button><button aria-label="Wyrównaj w pionie"><svg><use href="#v2"/></svg></button><button aria-label="Wyrównaj dolne"><svg><use href="#v3"/></svg></button><i class="sep"></i><button aria-label="Rozłóż w poziomie"><svg><use href="#d1"/></svg></button><button aria-label="Rozłóż w pionie"><svg><use href="#d2"/></svg></button><i class="sep"></i><button aria-label="Wyśrodkuj poziomo"><svg><use href="#e1"/></svg></button><button aria-label="Wyśrodkuj pionowo"><svg><use href="#e2"/></svg></button><i class="grip"></i><button aria-label="Nowy"><svg><use href="#new"/></svg></button><button aria-label="Otwórz"><svg><use href="#open"/></svg></button><button aria-label="Zapisz"><svg><use href="#save"/></svg></button><i class="sep"></i><button aria-label="Ustawienia strony"><svg><use href="#book"/></svg></button><button aria-label="Drukuj"><svg><use href="#print"/></svg></button><button aria-label="Podgląd wydruku"><svg><use href="#preview"/></svg></button><i class="sep"></i><button aria-label="Wytnij"><svg><use href="#cut"/></svg></button><button aria-label="Kopiuj"><svg><use href="#copy"/></svg></button><button aria-label="Wklej"><svg><use href="#paste"/></svg></button><i class="grip"></i><button aria-label="W górę"><svg><use href="#up"/></svg></button><button aria-label="W dół"><svg><use href="#down"/></svg></button><i class="sep"></i><button aria-label="W lewo"><svg><use href="#left"/></svg></button><button aria-label="W prawo"><svg><use href="#right"/></svg></button><i class="grip"></i><button aria-label="Wypełnienie"><svg><use href="#bucket"/></svg></button><i class="arr"></i><button aria-label="Kolor linii"><svg><use href="#pen"/></svg></button><i class="arr"></i><button aria-label="Gradient"><svg><use href="#rect"/></svg></button><i class="arr"></i><button aria-label="Grubość linii"><svg><use href="#lines"/></svg></button><button aria-label="Styl linii"><svg><use href="#dashes"/></svg></button></div>
</div>

<main class="work">
<aside class="side">
<h2>Drzewo zestawienia<button aria-label="Zamknij panel"><svg><use href="#x"/></svg></button></h2>
<div class="treebox">
<ul class="tree">
<li><p class="open sel"><svg class="chev"><use href="#chev"/></svg><span class="ic"></span><b>Report</b></p>
<ul>
<li><p class="open"><svg class="chev"><use href="#chev"/></svg><svg class="ic"><use href="#params"/></svg><b>Parameters</b></p>
<ul><li><p><svg class="ic"><use href="#param"/></svg><b>stFileNamePrefix</b></p></li><li><p><svg class="ic"><use href="#param"/></svg><b>stFileNameSufix</b></p></li></ul></li>
<li><p class="open"><svg class="chev"><use href="#chev"/></svg><svg class="ic"><use href="#layers"/></svg><b>Design Layers</b></p>
<ul><li><p><svg class="ic"><use href="#memo"/></svg><b>Foreground</b></p></li></ul></li>
<li><p class="open"><svg class="chev"><use href="#chev"/></svg><svg class="ic"><use href="#band"/></svg><b>Nagłówek</b></p>
<ul><li><p><svg class="ic"><use href="#A"/></svg><b>Label3</b></p></li><li><p><svg class="ic"><use href="#filter"/></svg><b>WarunkiFiltru1</b></p></li><li><p><svg class="ic"><use href="#A"/></svg><b>Label4</b></p></li><li><p><svg class="ic"><use href="#A"/></svg><b>Label5</b></p></li><li><p><svg class="ic"><use href="#A"/></svg><b>Label6</b></p></li><li><p><svg class="ic"><use href="#A"/></svg><b>Label7</b></p></li><li><p><svg class="ic"><use href="#A"/></svg><b>Label8</b></p></li><li><p><svg class="ic"><use href="#A"/></svg><b>Label9</b></p></li><li><p><svg class="ic"><use href="#A"/></svg><b>Label10</b></p></li><li><p><svg class="ic"><use href="#A"/></svg><b>Label11</b></p></li><li><p><svg class="ic"><use href="#A"/></svg><b>Label12</b></p></li><li><p><svg class="ic"><use href="#A"/></svg><b>Label13</b></p></li><li><p><svg class="ic"><use href="#A"/></svg><b>Label14</b></p></li></ul></li>
<li><p class="open"><svg class="chev"><use href="#chev"/></svg><svg class="ic"><use href="#group"/></svg><b>Grupy[0]: INDEKS</b></p>
<ul><li><p class="open"><svg class="chev"><use href="#chev"/></svg><svg class="ic"><use href="#band"/></svg><b>Nagłówek</b></p><ul><li><p><svg class="ic"><use href="#line"/></svg><b>Line2</b></p></li></ul></li>
<li><p class="open"><svg class="chev"><use href="#chev"/></svg><svg class="ic"><use href="#band"/></svg><b>Stopka</b></p><ul><li><p><svg class="ic"><use href="#dbcalc"/></svg><b>DBCalc1</b></p></li><li><p><svg class="ic"><use href="#dbcalc"/></svg><b>DBCalc2</b></p></li><li><p><svg class="ic"><use href="#A"/></svg><b>Label1</b></p></li><li><p><svg class="ic"><use href="#line"/></svg><b>Line1</b></p></li></ul></li></ul></li>
<li><p class="open"><svg class="chev"><use href="#chev"/></svg><svg class="ic"><use href="#band"/></svg><b>Szczegóły</b></p>
<ul><li><p><svg class="ic"><use href="#dbA"/></svg><b>DBText1</b></p></li><li><p><svg class="ic"><use href="#dbA"/></svg><b>DBText2</b></p></li><li><p><svg class="ic"><use href="#dbA"/></svg><b>DBText3</b></p></li><li><p><svg class="ic"><use href="#dbA"/></svg><b>DBText4</b></p></li><li><p></p></li></ul></li>
<li><p></p></li>
</ul></li>
</ul>
<div class="vscroll"><svg class="flip"><use href="#chev"/></svg><i class="thumb t1"></i><svg><use href="#chev"/></svg></div>
</div>
<h2 class="ph">Properties for Report</h2>
<div class="propbox">
<table class="props">
<colgroup><col class="gutter"><col class="name"><col></colgroup>
<tbody><tr class="cat"><th colspan="3"><i class="pm minus"></i>Data</th></tr>
<tr><td></td><th>DataPipeline</th><td>POZZAMWSP</td></tr>
<tr><td></td><th><i class="pm"></i>NoDataBehaviors</th><td>[ndBlankPage]</td></tr></tbody>
<tbody><tr class="cat"><th colspan="3"><i class="pm minus"></i>Generation</th></tr>
<tr><td></td><th>AutoStop</th><td><input type="checkbox" aria-label="AutoStop"></td></tr>
<tr><td></td><th><i class="pm"></i>BackgroundPrint</th><td>(TppBackgroundPrintSettings)</td></tr>
<tr><td></td><th>CachePages</th><td><input type="checkbox" checked aria-label="CachePages"></td></tr>
<tr><td></td><th>DefaultFileDevice</th><td>PDF</td></tr>
<tr><td></td><th>DeviceType</th><td>Screen</td></tr>
<tr><td></td><th>PageLimit</th><td>0</td></tr>
<tr><td></td><th>ParametersEditor</th><td>(Edit...)</td></tr>
<tr><td></td><th>PassSetting</th><td>psTwoPass</td></tr></tbody>
<tbody><tr class="cat"><th colspan="3"><i class="pm minus"></i>Layout</th></tr>
<tr><td></td><th>ColumnPositions</th><td>(TStringList)</td></tr>
<tr><td></td><th>Columns</th><td>1</td></tr>
<tr><td></td><th>ColumnWidth</th><td>0</td></tr>
<tr><td></td><th><i class="pm"></i>PrinterSetup</th><td>(TppPrinterSetup)</td></tr>
<tr><td></td><th>SavePrinterSetup</th><td><input type="checkbox" checked aria-label="SavePrinterSetup"></td></tr>
<tr><td></td><th>Units</th><td>utMillimeters</td></tr></tbody>
</table>
<div class="vscroll"><svg class="flip"><use href="#chev"/></svg><i class="thumb t2"></i><svg><use href="#chev"/></svg></div>
</div>
</aside>

<section class="designer">
<div class="rulerrow"><svg class="corner"><use href="#sheet"/></svg>
<div class="ruler"><span>0</span><span>10</span><span>20</span><span>30</span><span>40</span><span>50</span><span>60</span><span>70</span><span>80</span><span>90</span><span>100</span><span>110</span><span>120</span><span>130</span><span>140</span><span>150</span><span>160</span><span>170</span><span>180</span><span>190</span><span>200</span><span>210</span><span>220</span><span>230</span><span>240</span><span>250</span><span>260</span><span>270</span><span>280</span><span>290</span><span>300</span></div></div>
<div class="canvas">
<div class="vr b-head"><span>0</span><span>1<br>0</span><span>2<br>0</span></div>
<div class="band b-head"><div class="el title">ZESTAWIENIE NIEZREALIZOWANYCH ZAMÓWIEŃ</div><div class="el filterbox"></div>
<div class="hdr"><div class="el k1">Indeks</div><div class="el k2">Nazwa</div><div class="el k3">l.zamawiana</div><div class="el k4">.zrealiz:</div><div class="el k5">Jm</div><div class="el k6">Termin dost</div><div class="el k7">Kontrahent</div><div class="el k8">Dokument, data</div><div class="el k11">Na podst</div><div class="el k12">Dt. na podst</div><div class="el k13">Polecenie prod</div></div></div>
<div class="strip"><i>^</i>Nagłówek</div>
<div class="vr"></div><div class="strip"><i>^</i>Nagłówek grupy[0]: INDEKS</div>
<div class="vr b-det"><span>0</span></div>
<div class="band b-det"><div class="el k1">INDEKS</div><div class="el k2 bold">NAZWASKR</div><div class="el k3 r">ILZAM</div><div class="el k4 r">ZREALIZZAM</div><div class="el k5">JM</div><div class="el k6">TERMINDOST</div><div class="el k7 bold">NAZWASKR (2)</div><div class="el k8">SKROTDEFI</div><div class="el k9">NRDOKWEW</div><div class="el k10">DATADOK</div><div class="el k11">NAPODSTA</div><div class="el k12">DTNAPODST</div><div class="el k13">WARTOSC</div></div>
<div class="strip"><i>^</i>Szczegóły</div>
<div class="vr b-gf"><span>0</span></div>
<div class="band b-gf"><div class="el bold s1">RAZEM</div><div class="el bold s2 r">uma(ILZAM)</div><div class="el bold s3 r">REALIZZAM)</div></div>
<div class="strip dark"><i>^</i>Stopka grupy[0]: INDEKS</div>
<div class="vr b-foot"><span>0</span></div>
<div class="band b-foot"><div class="el tiny f1">2018-04-19 12:59:12</div><div class="el tiny f2">Strona 1 z</div></div>
<div class="strip plain"><i>^</i>Stopka</div>
<div class="vr b-sum"><span>0</span></div>
<div class="band b-sum"><div class="el bold s1">RAZEM</div><div class="el bold s2 r">uma(ILZAM)</div><div class="el bold s3 r">REALIZZAM)</div></div>
<div class="strip last"><i>^</i>Zakończenie</div>
</div>
</section>

<aside class="right">
<h2>Drzewo danych<button aria-label="Zamknij panel"><svg><use href="#x"/></svg></button></h2>
<div class="dtree"><i></i><p><svg><use href="#dtable"/></svg>POZZAMWSP</p></div>
<h2>Pola POZZAMWSP</h2>
<div class="fieldbox"><table class="fields">
<thead><tr><th>Nazwa</th><th>Typ</th></tr></thead>
<tbody>
<tr class="sel"><td><svg><use href="#field"/></svg>LP</td><td>Integer</td></tr>
<tr><td><svg><use href="#field"/></svg>INDEKS</td><td>String</td></tr>
<tr><td><svg><use href="#field"/></svg>NAZWASKR</td><td>String</td></tr>
<tr><td><svg><use href="#field"/></svg>TERMINDOST</td><td>DateTime</td></tr>
<tr><td><svg><use href="#field"/></svg>ILZAM</td><td>Double</td></tr>
<tr><td><svg><use href="#field"/></svg>ILZREALIZZAM</td><td>Double</td></tr>
<tr><td><svg><use href="#field"/></svg>JM</td><td>String</td></tr>
<tr><td><svg><use href="#field"/></svg>DATADOK</td><td>DateTime</td></tr>
<tr><td><svg><use href="#field"/></svg>NRDOKWEW</td><td>String</td></tr>
<tr><td><svg><use href="#field"/></svg>NAPODSTAWIE</td><td>String</td></tr>
<tr><td><svg><use href="#field"/></svg>DTNAPODSTAWIE</td><td>DateTime</td></tr>
<tr><td><svg><use href="#field"/></svg>WARTOSC</td><td>String</td></tr>
<tr><td><svg><use href="#field"/></svg>NAZWADL</td><td>String</td></tr>
<tr><td><svg><use href="#field"/></svg>NAZWASKR (2)</td><td>String</td></tr>
<tr><td><svg><use href="#field"/></svg>SKROTDEFDOK</td><td>String</td></tr>
</tbody></table></div>
<div class="hscroll"><svg class="l"><use href="#chev"/></svg><i></i><svg class="rt"><use href="#chev"/></svg></div>
<div class="btabs" role="tablist"><button role="tab" class="on">Dane</button><button role="tab">Układ</button></div>
</aside>
</main>
<footer class="status"><span class="msg">Gotowe.</span><span>Z lewej: 0</span><span>Z góry: 0</span><span>Szerokość: 0</span><span>Wysokość: 0</span><label for="zoom">100%</label><input id="zoom" type="range" min="0" max="100" value="10"></footer>
</div>
<div class="chin"></div>
</div></div>
<div class="base"><div class="notch"></div></div>
<svg class="under" viewBox="0 0 2423 34" preserveAspectRatio="none" aria-hidden="true"><path d="M0 0H2423C2400 12 2350 19 2310 23C2295 27 2280 32 2240 32Q2222 32 2212 30H2115Q2110 32 2090 32T2068 30H340Q330 32 315 32T300 30H212Q200 32 175 32C140 32 135 26 119 23C70 17 25 11 0 0Z" fill="url(#gu)"/><ellipse cx="828" cy="19" rx="10" ry="2" fill="#5b5c60"/><ellipse cx="1594" cy="19" rx="10" ry="2" fill="#5b5c60"/></svg>
<div class="shadow"></div>
</div>
</body>
</html>
```
FILE: styles.css
```css
*{box-sizing:border-box}
body{margin:0;background:#fff;color:#111;font:11px/16px "Open Sans","Noto Sans",sans-serif}
h1,h2,p,ul{margin:0;padding:0;font:inherit;list-style:none}
b,i{font-weight:inherit;font-style:normal}
button{margin:0;padding:0;border:0;background:none;color:inherit;font:inherit;display:flex;align-items:center}
svg{display:block;flex:none;width:16px;height:16px}
table{border-collapse:collapse;table-layout:fixed}
th,td{padding:0;font-weight:400;text-align:left}
.defs{position:absolute;width:0;height:0}
.serif{font-family:"Liberation Serif",serif;font-weight:700}
.sansb{font-family:"Liberation Sans",sans-serif;font-weight:700}

/* laptop shell */
.laptop{display:flex;flex-direction:column;height:100vh;min-height:1000px;padding:3px 16px 0 11px}
.lid{flex:1;min-height:0;display:flex;margin:0 201px;padding:11px 13px 0 12px;border-radius:58px 58px 0 0;background:#ededef;box-shadow:inset 0 0 0 1px #dcdcde,inset 0 0 0 7px #f1f1f2,inset 0 0 0 8px #d4d6d8}
.bezel{flex:1;min-width:0;display:flex;flex-direction:column;padding:0 39px;border:1px solid #b4b6b9;border-top:2px solid #98999c;border-bottom:0;border-radius:46px 46px 0 0;background:linear-gradient(#e9eaec 0,#e9e9ec 60%,#d8d9db 100%)}
.camera{width:10px;height:10px;flex:none;margin:20px auto 31px;border-radius:50%;background:#d9dadd;border:2px solid #e1e2e4}
.screen{flex:1;min-height:0;display:flex;flex-direction:column;background:#f0f0f0;overflow:hidden}
.chin{height:55px;flex:none;margin:0 -39px;background:linear-gradient(#d8d9db 0 25px,#cfd0d2 25px 26px,#dfe0e2 27px,#d5d6d8)}
.base{height:34px;flex:none;display:flex;justify-content:center;background:linear-gradient(#f7f7fa 0 2px,transparent 2px),linear-gradient(90deg,#dfe0e3,#ebebed 16px,#e6e6e8 60px,#e7e8ea calc(100% - 60px),#eeeef1 calc(100% - 30px),#dcdce2);border-bottom:1px solid #d4d4d8}
.notch{width:346px;height:27px;border-radius:0 0 22px 22px;background:linear-gradient(90deg,#d2d3d5,#f2f2f3 20px,#f4f4f5 calc(100% - 20px),#d2d3d5);box-shadow:inset 0 -1px #fff}
.under{width:100%;height:33px;flex:none}
.shadow{height:63px;flex:none;margin-top:-3px;background:linear-gradient(#c9cacc,#ececed 8px,#fbfbfb 18px,#fff 26px);-webkit-mask:linear-gradient(90deg,transparent,#000 240px,#000 calc(100% - 240px),transparent)}

/* title, menu, tabs */
.titlebar{display:flex;align-items:center;height:19px;flex:none;padding:0 17px 3px 2px;background:#fff;border-radius:4px 4px 0 0}
.appicon{width:15px;height:15px}
.titlebar h1{flex:1;padding-left:5px}
.winbtns{display:flex;gap:35px}
.winbtns svg{width:11px;height:11px}
.menu{display:flex;align-items:center;gap:12px;height:26px;flex:none;background:#efefef;border-bottom:1px solid #c3c3c3}
.menu .grip{margin:0 -7px 0 4px}
.grip{flex:none;width:3px;height:15px;margin:0 1px 0 6px;background:repeating-linear-gradient(#b9b9b9 0 1px,transparent 1px 2px)}
.tabs{display:flex;height:23px;flex:none;padding-left:5px;background:linear-gradient(#fff 0 22px,#111 22px)}
.tabs button{gap:4px;height:22px;padding:2px 6px 0 3px;background:linear-gradient(#aaa,#aaa) right 6px/1px 12px no-repeat}
.tabs button.on{gap:3px;height:20px;margin-top:3px;padding:0 3px 0 1px;background:#f2f2f2;border:1px solid #111;border-width:2px 2px 0 1px}
.tabs button.on+button{gap:2px}

/* toolbars */
.bars{display:flex;flex-direction:column;gap:2px;flex:none;padding:4px 0 5px;background:#f1f1f1}
.bar{display:flex;align-items:center;height:24px}
.bar .grip{height:20px}
.bar button{width:23px;height:22px;justify-content:center}
.bar button.on{background:#dcebf8;border:1px solid #1e84dc}
.bar svg{width:15px;height:15px}
.sep{width:1px;height:23px;margin:0 3px 0 2px;background:#b9b9b9}
.arr{width:12px;height:4px;background:linear-gradient(#8c8c8c,#8c8c8c) 4px 0/5px 1px no-repeat,linear-gradient(#8c8c8c,#8c8c8c) 5px 1px/3px 1px no-repeat,linear-gradient(#8c8c8c,#8c8c8c) 6px 2px/1px 1px no-repeat}
.fonts{padding-left:278px}
.combo{position:relative;width:49px;height:21px;background:linear-gradient(90deg,#fff calc(100% - 12px),#f1f1f1 0)}
.combo.wide{width:146px;margin-right:3px}
.combo select{appearance:none;width:100%;height:21px;padding:0 2px;border:0;background:none;color:inherit;font:12px/19px "Open Sans",sans-serif}
.combo::after{content:"";position:absolute;right:3px;top:9px;border:3px solid transparent;border-top:4px solid #111;border-bottom:0}
.edit{width:198px;height:21px;border:1px solid #ababab;background:#f1f1f1}

/* workspace */
.work{flex:1;min-height:0;display:flex}
h2{display:flex;align-items:center;justify-content:space-between;height:22px;flex:none;padding:0 6px 0 5px;background:#f0f0f0}
h2 svg{width:9px;height:9px}
.side{width:327px;flex:none;display:flex;flex-direction:column;margin-left:2px;border:1px solid #fafafa;border-width:0 1px 1px}
.treebox{flex:1;min-height:0;display:flex;overflow:hidden;background:#fff;border-bottom:3px solid #f8f8f8}
.tree{flex:1;padding:1px 0 0 2px}
.tree ul{padding-left:19px}
.tree li{background:repeating-linear-gradient(#999 0 1px,transparent 1px 2px) 9px 0/1px 100% no-repeat}
.tree li:last-child{background-size:1px 8px}
.tree p{display:flex;align-items:center;height:16px;padding-left:19px;background:repeating-linear-gradient(90deg,#999 0 1px,transparent 1px 2px) 9px 8px/11px 1px no-repeat;white-space:nowrap}
.tree p.open{padding-left:0;background:repeating-linear-gradient(90deg,#999 0 1px,transparent 1px 2px) 17px 8px/4px 1px no-repeat,linear-gradient(#fff,#fff) 0 0/17px 16px no-repeat}
.chev{width:9px;height:9px;margin:0 5px}
.ic{width:16px;height:16px;margin:0 2px 0 1px}
.tree b{padding-left:4px}
.tree .sel .ic{width:19px;height:16px;margin:0;background:#cce8ff}
.tree .sel b{padding-right:4px;background:#cce8ff}
.vscroll{display:flex;flex-direction:column;align-items:center;width:15px;flex:none;background:#f0f0f0}
.vscroll svg{width:9px;height:9px;margin:4px 0}
.vscroll .thumb{width:15px;background:#cdcdcd}
.flip{transform:rotate(180deg)}
.vscroll .t1{flex:0 0 311px;margin-bottom:auto}
.vscroll .t2{flex:0 0 113px;margin-bottom:auto}
.ph{height:20px}
.propbox{display:flex;flex:none}
.props{flex:1;width:100px;background:#fff}
.gutter{width:17px}
.name{width:104px}
.props tr{height:16px}
.props td,.props th{height:16px;line-height:15px;white-space:nowrap;overflow:hidden}
.props tr>td:first-child{background:#f0f0f0}
.props tr:not(.cat) th{padding-left:15px;border:1px solid #ececec;border-left-color:#aaa;border-width:0 1px 1px}
.props tr:not(.cat) td:last-child{border-bottom:1px solid #ececec;padding-left:1px}
.props .cat th{background:#f0f0f0;font-weight:700;border:solid #adadad;border-width:1px 0}
.props tbody:nth-child(2) .cat th{border-top:0}
.pm{display:inline-block;width:9px;height:9px;margin:0 4px 0 3px;border:1px solid #222;background:linear-gradient(#222,#222) center/5px 1px no-repeat,linear-gradient(#222,#222) center/1px 5px no-repeat}
.pm.minus{background:linear-gradient(#222,#222) center/5px 1px no-repeat}
.props tr:not(.cat) .pm{margin:0 4px 0 -13px}
.props input{appearance:none;display:block;width:12px;height:12px;margin:0 0 1px 2px;border:solid #111;border-width:2px 0 0 2px;background:#fff}
.props input:checked::after{content:"";display:block;width:8px;height:4px;margin:1px;border:solid #111;border-width:0 0 2px 2px;transform:rotate(-45deg)}

/* report designer */
.designer{flex:1;min-width:0;display:flex;flex-direction:column;padding-left:4px;overflow:hidden}
.rulerrow{display:flex;height:22px;flex:none;align-items:flex-start;padding-top:1px}
.corner{width:14px;height:15px;margin-right:6px}
.ruler{display:grid;grid-template-columns:repeat(31,1fr);width:1171px;flex:none;height:15px;background:#fff}
.ruler span{padding:5px 0 0 2px;font:bold 9px/10px "Liberation Sans",sans-serif;color:#222;background:linear-gradient(#222,#222) 0 0/1px 15px no-repeat,linear-gradient(#222,#222) 9px 0/1px 3px no-repeat,linear-gradient(#222,#222) 19px 0/1px 4px no-repeat,linear-gradient(#222,#222) 28px 0/1px 3px no-repeat}
.ruler span:first-child{background-size:0 0,1px 3px,1px 4px,1px 3px}
.canvas{flex:1;display:grid;grid-template-columns:14px 1072px;column-gap:6px;align-content:start;background:linear-gradient(90deg,#f0f0f0 20px,#fcfcfc 20px)}
.vr{grid-column:1;background:repeating-linear-gradient(transparent 0 8px,#333 8px 9px,transparent 9px 10px) 0 0/4px 100% no-repeat #fff;text-align:right;padding-right:2px;font:bold 8px/8px "Liberation Sans",sans-serif}
.vr span{display:block;height:38px;padding-top:3px}
.vr span+span{border-top:2px solid #555}
.vr:not(.b-head) span{height:12px}
.band{grid-column:2;position:relative;background:linear-gradient(90deg,transparent 1px,#fff 1px) 0 0/8px 8px,linear-gradient(#8a8a8a 1px,#fff 1px) 0 0/8px 8px}
.b-head{height:106px}.b-det{height:13px}.b-gf{height:30px}.b-foot{height:14px}.b-sum{height:33px}
.strip{grid-column:2;height:17px;padding-left:6px;background:#f0f0f0;line-height:17px;border-bottom:1px dashed #888}
.strip i{display:inline-block;width:14px}
.strip.dark{border-bottom-color:#222}
.strip.plain{border-bottom:0}
.strip.last{height:18px;border-bottom:2px solid #8a8a8a}
.el{position:absolute;top:0;height:13px;overflow:hidden;border:1px dashed #888;white-space:nowrap;color:#222;font:10px/12px "Liberation Sans",sans-serif}
.title{left:3px;top:9px;width:488px;height:22px;font-size:19px;line-height:21px;color:#111}
.filterbox{left:497px;top:9px;width:408px;height:62px}
.hdr .el{top:91px;height:14px;font-size:11px;line-height:13px;font-style:italic}
.bold{font-weight:700;font-size:11px;color:#111}
.r{display:flex;justify-content:flex-end}
.tiny{font-size:8px;height:10px;line-height:9px}
.k1{left:3px;width:126px}.k2{left:133px;width:160px}.k3{left:296px;width:65px}.k4{left:363px;width:66px}.k5{left:432px;width:27px}.k6{left:462px;width:65px}.k7{left:528px;width:117px}.k8{left:646px;width:58px}.k9{left:706px;width:62px}.k10{left:770px;width:54px}.k11{left:828px;width:60px}.k12{left:890px;width:63px}.k13{left:955px;width:117px}
.hdr .k1{width:33px}.hdr .k2{width:34px}.hdr .k3{left:300px;width:61px}.hdr .k4{left:388px;width:41px}.hdr .k5{width:17px}.hdr .k6{width:60px}.hdr .k7{width:52px}.hdr .k8{width:75px}.hdr .k11{width:47px}.hdr .k12{width:60px}.hdr .k13{width:73px}
.s1{left:251px;width:41px}.s2{left:295px;width:66px}.s3{left:362px;width:69px}
.b-gf .el{top:2px}.b-sum .el{top:10px}
.f1{left:0;width:77px;top:1px}.f2{left:1031px;width:41px;top:1px}

/* data tree */
.right{width:177px;flex:none;display:flex;flex-direction:column;margin-right:3px;background:#fff}
.dtree{display:flex;align-items:flex-start;height:75px;flex:none;padding:1px 0 0 11px}
.dtree i{width:10px;height:1px;margin-top:7px;background:repeating-linear-gradient(90deg,#999 0 1px,transparent 1px 2px)}
.dtree p{display:flex;align-items:center;gap:5px;padding:0 3px;background:#d9d9d9}
.dtree svg{width:14px;height:14px}
.fieldbox{flex:1;min-height:0;overflow:hidden}
.fields{width:177px}
.fields tr{height:17px}
.fields th{height:23px;padding-left:7px}
.fields th:first-child{width:130px;border-right:1px solid #e5e5e5}
.fields td{height:17px;line-height:16px;white-space:nowrap;overflow:hidden}
.fields td:first-child{padding-left:4px}
.fields td+td{padding-left:7px}
.fields .sel td:first-child{background:linear-gradient(#d9d9d9,#d9d9d9) 5px 0/124px 17px no-repeat}
.fields svg{float:left;margin-right:2px}
.hscroll{display:flex;align-items:center;height:15px;flex:none;background:#f0f0f0}
.hscroll svg{width:9px;height:9px;margin:0 4px}
.hscroll i{width:106px;height:15px;margin-right:auto;background:#cdcdcd}
.hscroll .l{transform:rotate(90deg)}
.hscroll .rt{transform:rotate(-90deg)}
.btabs{display:flex;height:23px;flex:none;margin:1px 0 2px;padding-left:6px;border:1px solid #c0c0c0;border-top:2px solid #111}
.btabs button{height:16px;padding:0 5px;border-right:1px solid #aaa}
.btabs button.on{height:20px;margin-top:-2px;padding:0 4px;background:#f3f3f3;border:2px solid #111;border-width:0 2px 2px 1px}

/* status bar */
.status{display:flex;align-items:center;height:24px;flex:none;padding:4px 23px 0 0;background:#f0f0f0}
.status span,.status label{width:90px;height:18px;padding-left:5px;border-left:1px solid #c0c0c0;line-height:17px}
.status .msg{flex:1;width:auto;padding-left:0;border:0}
.status label{width:50px}
.status input{appearance:none;width:138px;height:9px;margin:0;background:#e7eaea;border:1px solid #d3d6d6}
.status input::-webkit-slider-thumb{appearance:none;width:8px;height:13px;border-radius:4px 4px 0 0;background:#0f78d4}
```
